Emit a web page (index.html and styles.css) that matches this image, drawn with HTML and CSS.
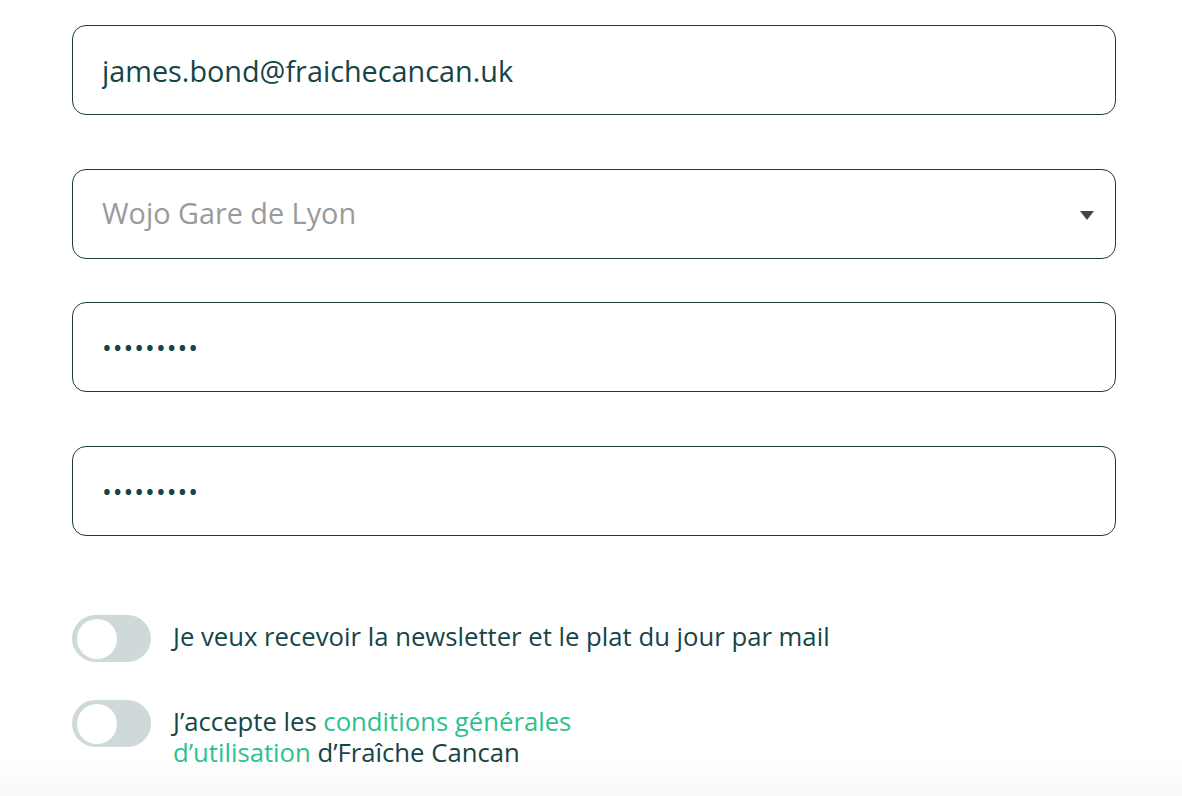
FILE: index.html
```html
<!DOCTYPE html>
<html lang="fr">
<head>
<meta charset="utf-8">
<title>Inscription</title>
<link rel="stylesheet" href="styles.css">
</head>
<body>
<form class="form">
  <div class="field field-email">
    <input class="input" type="email" value="james.bond@fraichecancan.uk">
  </div>
  <div class="field field-select">
    <select class="input select">
      <option>Wojo Gare de Lyon</option>
    </select>
    <svg class="caret" width="14" height="9" viewBox="0 0 14 9"><path d="M0 0H14L7 9Z" fill="#444"/></svg>
  </div>
  <div class="field field-pass1">
    <input class="input password" type="password" value="secret007">
  </div>
  <div class="field field-pass2">
    <input class="input password" type="password" value="secret007">
  </div>

  <label class="toggle-row row-newsletter">
    <span class="toggle"><span class="knob"></span></span>
    <span class="toggle-text">Je veux recevoir la newsletter et le plat du jour par mail</span>
  </label>
  <label class="toggle-row row-cgu">
    <span class="toggle"><span class="knob"></span></span>
    <span class="toggle-text">J’accepte les <a class="link" href="#">conditions générales<br>d’utilisation</a> d’Fraîche Cancan</span>
  </label>
</form>
</body>
</html>
```

FILE: styles.css
```css
html, body {
  margin: 0;
  padding: 0;
}
body {
  min-height: 100vh;
  font-family: "Open Sans", "Noto Sans", sans-serif;
  color: #164547;
  background: linear-gradient(to bottom, #ffffff 0, #ffffff 760px, #fbfbfb 778px, #f9f9f9 100%);
  background-attachment: fixed;
}
.form {
  padding: 25px 0 0 72px;
  width: 1044px;
  display: flex;
  flex-direction: column;
}
.field {
  position: relative;
  height: 90px;
}
.field-select { margin-top: 54px; }
.field-pass1 { margin-top: 43px; }
.field-pass2 { margin-top: 54px; }
.input {
  box-sizing: border-box;
  width: 100%;
  height: 90px;
  margin: 0;
  padding: 0 29px;
  border: 1px solid #1d3a3b;
  border-radius: 14px;
  background: #fff;
  font-family: "Open Sans", "Noto Sans", sans-serif;
  font-size: 28.8px;
  color: #164547;
  outline: none;
}
.select {
  appearance: none;
  -webkit-appearance: none;
  color: #9a9a9a;
  padding-bottom: 3px;
}
.caret {
  position: absolute;
  right: 22px;
  top: 42px;
  pointer-events: none;
}
.password {
  font-size: 26px;
  letter-spacing: 1px;
}
.toggle-row {
  display: flex;
  align-items: flex-start;
  gap: 22px;
}
.row-newsletter { margin-top: 79px; }
.row-cgu { margin-top: 38px; }
.toggle {
  flex: none;
  width: 79px;
  height: 47px;
  border-radius: 24px;
  background: #cfd9da;
  display: flex;
  align-items: center;
  padding-left: 5px;
  box-sizing: border-box;
}
.knob {
  width: 40px;
  height: 40px;
  border-radius: 50%;
  background: #fff;
}
.toggle-text {
  padding-top: 6px;
  font-size: 25.7px;
  line-height: 31px;
  color: #164547;
}
.link {
  color: #2cc28e;
  text-decoration: none;
}
```
